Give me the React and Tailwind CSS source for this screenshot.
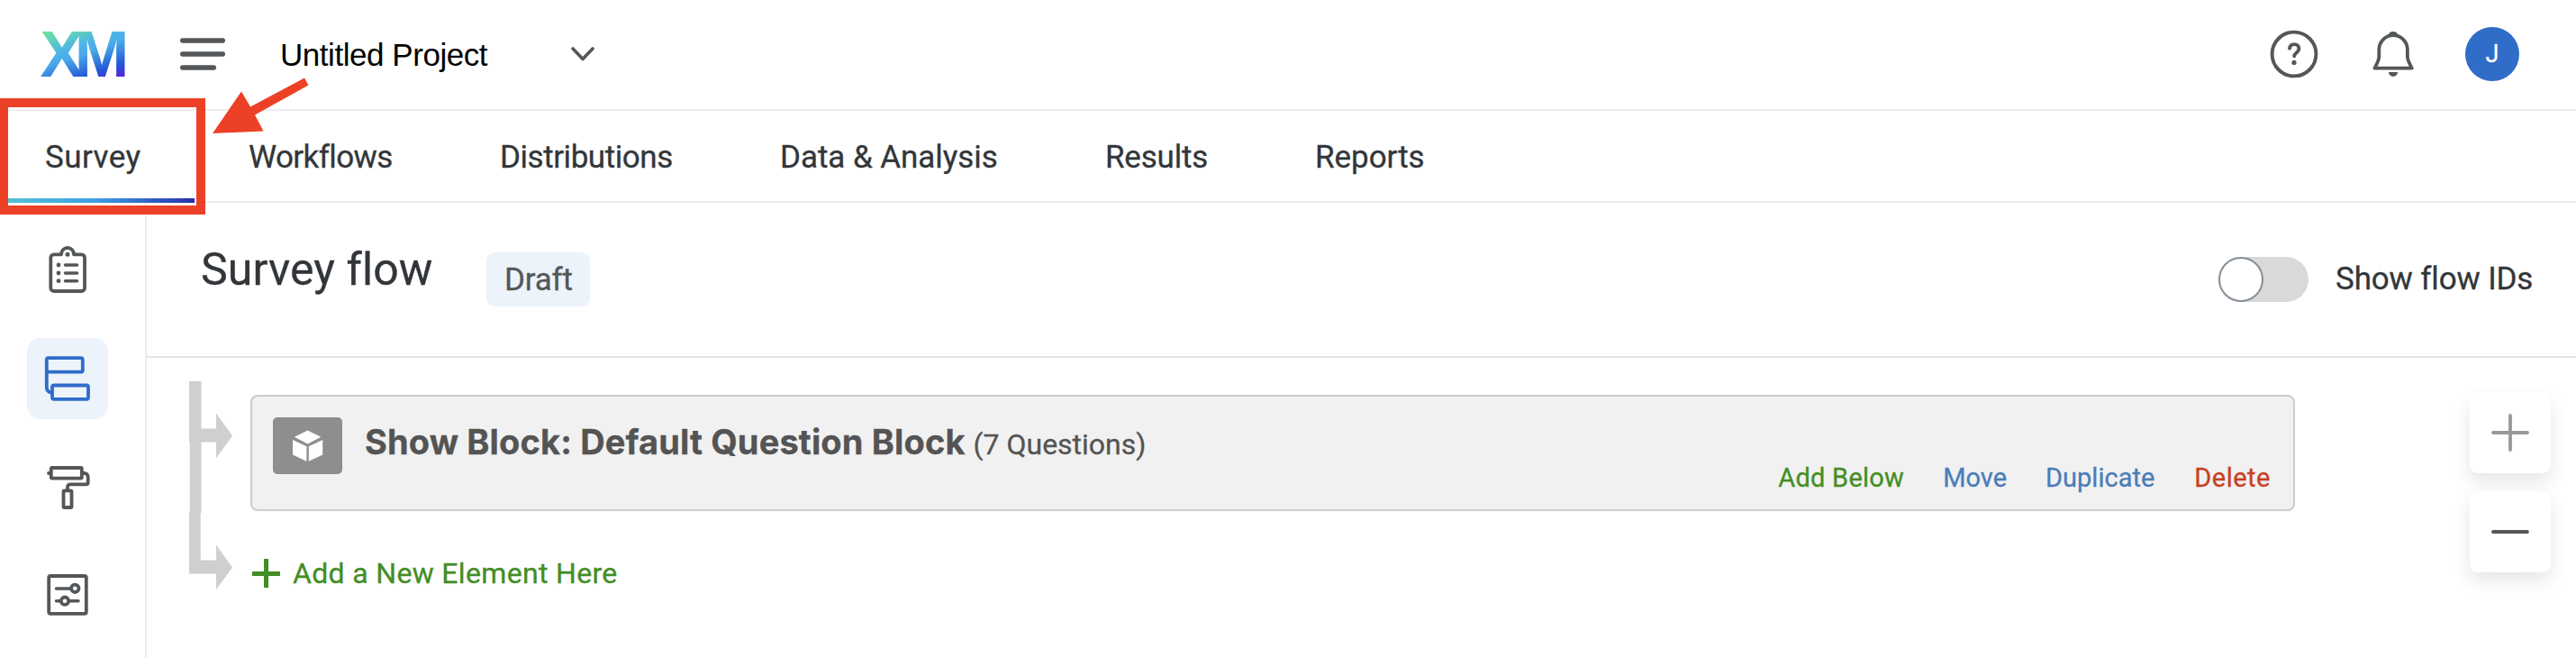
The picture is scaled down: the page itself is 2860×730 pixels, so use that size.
import React from 'react';

const TABS = [
  { id: 'survey', label: 'Survey', className: 'w-[226px] pl-[60px] tracking-[0.45px]' },
  { id: 'workflows', label: 'Workflows', className: 'w-[279px] pl-[60px] tracking-[-0.6px]' },
  { id: 'distributions', label: 'Distributions', className: 'w-[311px] pl-[60px] tracking-[-0.45px]' },
  { id: 'data', label: 'Data & Analysis', className: 'w-[361px] pl-[60px] tracking-[-0.05px]' },
  { id: 'results', label: 'Results', className: 'w-[233px] pl-[60px] tracking-[-0.2px]' },
  { id: 'reports', label: 'Reports', className: 'w-[240px] pl-[60px] tracking-[-0.05px]' },
];

const SIDEBAR_ITEMS = [
  { id: 'builder', icon: ClipboardIcon },
  { id: 'flow', icon: FlowIcon },
  { id: 'look', icon: RollerIcon },
  { id: 'options', icon: OptionsIcon },
];

const BLOCK_ACTIONS = [
  { label: 'Add Below', className: 'text-[#438e25] tracking-[0.25px] mr-[43px]' },
  { label: 'Move', className: 'text-[#4a7db8] mr-[43px]' },
  { label: 'Duplicate', className: 'text-[#4a7db8] mr-[44px]' },
  { label: 'Delete', className: 'text-[#c8401f] tracking-[0.5px]' },
];

function Logo() {
  return (
    <svg className="w-[104px] h-[60px] overflow-visible" viewBox="40 30 104 60">
      <defs>
        <linearGradient id="xm" gradientUnits="userSpaceOnUse" x1="46" y1="35" x2="70.6" y2="108">
          <stop offset="0.05" stopColor="#6be0a2" />
          <stop offset="0.38" stopColor="#4bb2ea" />
          <stop offset="0.5" stopColor="#4aa9e8" />
          <stop offset="0.8" stopColor="#2359d6" />
          <stop offset="0.9" stopColor="#3a3ad8" />
          <stop offset="1" stopColor="#5a1fd9" />
        </linearGradient>
      </defs>
      <text x="44.5 82.8" y="85" fill="url(#xm)" fontFamily="Liberation Sans, sans-serif" fontWeight="700" fontSize="72.7">XM</text>
    </svg>
  );
}

function ClipboardIcon() {
  return (
    <svg className="w-[90px] h-[90px]" viewBox="0 0 90 90" fill="none" stroke="currentColor" strokeWidth="3.8" strokeLinecap="round" strokeLinejoin="round">
      <path d="M38 27.3h-8.2a3.5 3.5 0 0 0-3.5 3.5v33.7a3.5 3.5 0 0 0 3.5 3.5h30.7a3.5 3.5 0 0 0 3.5-3.5V30.8a3.5 3.5 0 0 0-3.5-3.5H52a7 7.4 0 0 0-14 0" />
      <path d="M42.5 39h13M42.5 48h13M42.5 56.7h13" strokeWidth="3.6" />
      <g fill="currentColor" stroke="none">
        <circle cx="45" cy="27.3" r="2.5" />
        <circle cx="35" cy="39" r="2.4" />
        <circle cx="35" cy="48" r="2.4" />
        <circle cx="35" cy="56.7" r="2.4" />
      </g>
    </svg>
  );
}

function FlowIcon() {
  return (
    <svg className="w-[90px] h-[90px]" viewBox="0 0 90 90" fill="none" stroke="currentColor" strokeWidth="3.8">
      <rect x="21.8" y="22.2" width="40" height="15.5" rx="2" />
      <rect x="28" y="52.5" width="40" height="15.3" rx="2" />
      <path d="M21.8 36v18.5c0 3.5 2 6 6.2 6" />
    </svg>
  );
}

function RollerIcon() {
  return (
    <svg className="w-[90px] h-[90px]" viewBox="0 0 90 90" fill="none" stroke="currentColor" strokeWidth="3.8" strokeLinecap="round">
      <rect x="26.8" y="24" width="34" height="11.6" rx="1" />
      <path d="M24 30h2M61.5 30h2.2a4 4 0 0 1 4 4v6.3a2 2 0 0 1-2 2H48a3 3 0 0 0-3 3v3.5" />
      <rect x="40.5" y="49.3" width="9" height="18.7" rx="1" />
    </svg>
  );
}

function OptionsIcon() {
  return (
    <svg className="w-[90px] h-[90px]" viewBox="0 0 90 90" fill="none" stroke="currentColor" strokeWidth="3.8" strokeLinecap="round">
      <rect x="24.2" y="24" width="41.6" height="41.8" rx="2" />
      <path d="M32.5 38h16M32.5 51.7h5M47 51.7h10" strokeWidth="3.5" />
      <circle cx="53.3" cy="37.8" r="4.2" />
      <circle cx="42" cy="51.7" r="4.2" />
    </svg>
  );
}

function Header() {
  return (
    <header className="flex items-center h-[123px] pl-[40px] pr-[63px] pb-[1px] border-b-2 border-[#ededed] text-[#545759]">
      <Logo />
      <svg className="ml-[56px] w-[50px] h-[40px]" viewBox="0 0 50 40" fill="none" stroke="currentColor" strokeWidth="5.4" strokeLinecap="round">
        <path d="M2.7 5h44.6M2.7 20h44.6M2.7 35h34.6" />
      </svg>
      <span className="ml-[61px] w-[323px] pt-[2px] font-['Liberation_Sans',sans-serif] text-[35px] leading-[40px] tracking-[-0.45px] text-black [-webkit-text-stroke:0]">Untitled Project</span>
      <svg className="w-[26px] h-[16px]" viewBox="0 0 26 16" fill="none" stroke="currentColor" strokeWidth="3.6" strokeLinecap="round" strokeLinejoin="round">
        <path d="M2 2l11 11.5L24 2" />
      </svg>

      <div className="ml-auto flex items-center gap-[50px]">
        <svg className="w-[60px] h-[60px]" viewBox="0 0 60 60" fill="none" stroke="currentColor" strokeWidth="3.9" strokeLinecap="round">
          <circle cx="30" cy="30" r="24.4" />
          <path d="M25 23.6c.4-2.8 2.4-4.5 5.2-4.5 3 0 5.2 2 5.2 5 0 4.2-5.2 4.4-5.2 8.2" />
          <circle cx="30" cy="39.4" r="2.6" fill="currentColor" stroke="none" />
        </svg>
        <svg className="w-[60px] h-[60px]" viewBox="0 0 60 60" fill="none" stroke="currentColor" strokeWidth="3.8" strokeLinejoin="round">
          <path d="M9.4 45.6C11.5 41.5 14.3 37 14.3 33v-8a15.8 15.8 0 0 1 31.6 0v8c0 4 2.8 8.5 4.9 12.6z" />
          <path d="M25 9c0-2.5 2-4 5-4s5 1.500 5 4zM25 50h10a5 5 0 0 1-10 0z" fill="currentColor" stroke="none" />
        </svg>
        <div className="w-[60px] h-[60px] rounded-full bg-[#2f6dc9] text-white flex items-center justify-center text-[27px]">J</div>
      </div>
    </header>
  );
}

function Tabs() {
  return (
    <nav className="flex h-[102px] -ml-[10px] border-b-2 border-[#ededed] text-[35px] leading-[104px] text-[#32363a] whitespace-nowrap">
      {TABS.map(tab => (
        <div key={tab.id} className={`shrink-0 h-[102px] flex flex-col ${tab.className}`}>
          <span className="h-[97px]">{tab.label}</span>
          {tab.id === 'survey' && (
            <div className="-ml-[50px] w-[216px] h-[5px] bg-linear-to-r from-[#57c4cf] via-[#3f9de5] to-[#2a2ba8]" />
          )}
        </div>
      ))}
    </nav>
  );
}

function Sidebar({ active }) {
  return (
    <aside className="w-[163px] shrink-0 border-r-2 border-[#ededed] pl-[30px] pt-[30px] flex flex-col gap-[30px]">
      {SIDEBAR_ITEMS.map(item => {
        const Icon = item.icon;
        return (
          <button key={item.id} className={`w-[90px] h-[90px] rounded-[15px] ${active === item.id ? 'bg-[#ecf3fb] text-[#2f6dc9]' : 'text-[#545759]'}`}>
            <Icon />
          </button>
        );
      })}
    </aside>
  );
}

function FlowHeader() {
  return (
    <div className="flex h-[172px] pt-[55px] pl-[60px] pr-[46px] border-b-2 border-[#e4e4e4]">
      <h1 className="w-[317px] text-[50px] leading-[38px] tracking-[0.1px] text-[#32363a]">Survey flow</h1>
      <span className="w-[115px] h-[60px] pl-[20px] rounded-[9px] bg-[#ecf3fb] text-[35px] leading-[62px] tracking-[-0.2px] text-[#545759]">Draft</span>
      <div className="ml-auto flex items-center h-[60px] gap-[30px]">
        <div className="w-[100px] h-[50px] rounded-full bg-[#d9d9d9]">
          <div className="w-[50px] h-[50px] rounded-full bg-white border-2 border-[#868e98]" />
        </div>
        <span className="w-[221px] text-[35px] leading-[62px] tracking-[-0.15px] text-[#32363a] whitespace-nowrap">Show flow IDs</span>
      </div>
    </div>
  );
}

function FlowBlock() {
  return (
    <div className="flex w-[2270px] h-[129px] pl-[23px] pt-[23px] pr-[25px] rounded-[8px] border-2 border-[#cccccc] bg-[#f1f1f1]">
      <svg className="w-[77px] h-[63px] shrink-0 rounded-[5px] bg-[#8e8e8e]" viewBox="0 0 77 63" fill="#ffffff">
        <path d="M38.6 14.500l14.8 7.300-14.800 7.600-14.800-7.600zM22 25l15.400 7.200v16.600L22 41.500zM55.200 25l-15.400 7.200v16.600l15.400-7.300z" />
      </svg>
      <div className="ml-[25px] h-[55px] leading-[55px] text-[#545454] whitespace-nowrap">
        <span className="font-[Inter,sans-serif] text-[38px] font-bold tracking-[0.14px]">Show Block: Default Question Block</span>
        <span className="ml-[9px] text-[32px]">(7 Questions)</span>
      </div>
      <div className="ml-auto mt-[47px] flex text-[29px] leading-[40px]">
        {BLOCK_ACTIONS.map(action => (
          <a key={action.label} className={action.className}>{action.label}</a>
        ))}
      </div>
    </div>
  );
}

function FlowTree() {
  return (
    <svg className="mt-[26px] w-[50px] h-[232px] shrink-0" viewBox="0 0 50 232" fill="#cfcfcf">
      <path d="M1 0h13.500v52.500H31V35.500L49 60.500 31 85.500V67.500H14.500V146h-.8v52.500H31V181.500L49 206.500 31 231V213.500H1V146h.8V67.500H1z" />
    </svg>
  );
}

function ZoomButtons() {
  return (
    <div className="ml-[194px] mt-[38px] flex flex-col gap-[20px]">
      <button className="w-[90px] h-[90px] rounded-[9px] bg-white text-[#999999] shadow-[0_10px_20px_rgba(0,0,0,0.1)]">
        <svg className="w-[90px] h-[90px]" viewBox="0 0 90 90" stroke="currentColor" strokeWidth="3.8" strokeLinecap="round">
          <path d="M26 45h38M45 26v38" />
        </svg>
      </button>
      <button className="w-[90px] h-[90px] rounded-[9px] bg-white text-[#545759] shadow-[0_10px_20px_rgba(0,0,0,0.1)]">
        <svg className="w-[90px] h-[90px]" viewBox="0 0 90 90" stroke="currentColor" strokeWidth="3.8" strokeLinecap="round">
          <path d="M26 45h38" />
        </svg>
      </button>
    </div>
  );
}

export default function App() {
  return (
    <div className="relative w-[2860px] h-[730px] overflow-hidden bg-white font-[Roboto,sans-serif] flex flex-col [-webkit-text-stroke:0.3px]">
      <Header />
      <Tabs />
      <div className="flex flex-1">
        <Sidebar active="flow" />
        <main className="flex-1">
          <FlowHeader />
          <div className="flex items-start pl-[46px]">
            <FlowTree />
            <div className="ml-[19px] mt-[41px]">
              <FlowBlock />
              <a className="flex items-center mt-[49px] pl-[2px] h-[40px] text-[#438e25] text-[32px] leading-[40px] tracking-[0.33px]">
                <svg className="w-[31px] h-[32px]" viewBox="0 0 31 32" stroke="currentColor" strokeWidth="5">
                  <path d="M0 16.500h31M15.500 0v32" />
                </svg>
                <span className="ml-[14px]">Add a New Element Here</span>
              </a>
            </div>
            <ZoomButtons />
          </div>
        </main>
      </div>

      {/* highlight around the active tab */}
      <div className="absolute left-0 top-[109px] w-[228px] h-[129px] border-y-[10px] border-l-[9px] border-r-[10px] border-[#ec4126]" />
      <svg className="absolute left-[230px] top-[80px] w-[120px] h-[75px]" viewBox="230 80 120 75" fill="#ec4126">
        <path d="M236 148l32-46.500 10 17L338 86.500l4.500 8L283 127.500l9.500 18z" />
      </svg>
    </div>
  );
}
